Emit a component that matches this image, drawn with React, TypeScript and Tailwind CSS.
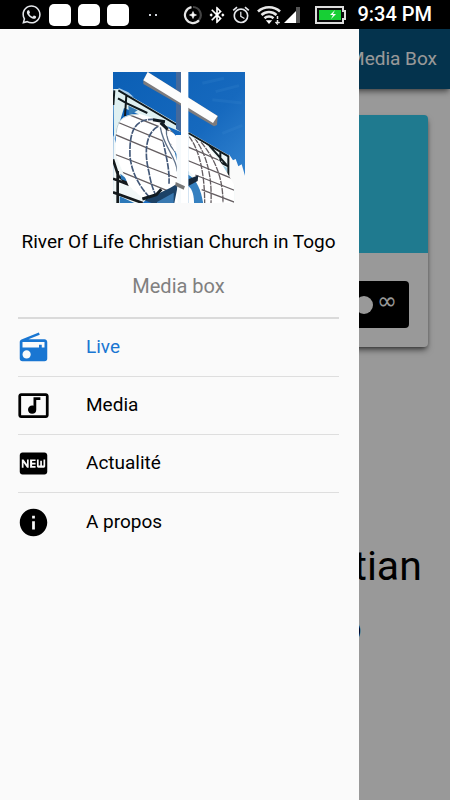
import React, { useState } from 'react';
import { FaWhatsapp } from 'react-icons/fa';
import { MdAccessAlarm, MdBluetoothConnected, MdFiberNew, MdInfo, MdMusicVideo, MdRadio } from 'react-icons/md';

const MENU = [
  { id: 'live', label: 'Live', Icon: MdRadio },
  { id: 'media', label: 'Media', Icon: MdMusicVideo },
  { id: 'news', label: 'Actualité', Icon: MdFiberNew },
  { id: 'about', label: 'A propos', Icon: MdInfo },
];

const StatusBar: React.FC = () => (
  <div className="flex h-[29px] items-center justify-between bg-black pl-[21px] pr-[18px] text-white">
    <div className="flex items-center gap-[7px]">
      <FaWhatsapp className="h-[21px] w-[21px] text-gray-200" />
      <span className="h-[22px] w-[22px] rounded-[5px] bg-white" />
      <span className="h-[22px] w-[22px] rounded-[5px] bg-white" />
      <span className="h-[22px] w-[22px] rounded-[5px] bg-white" />
      <span className="ml-[13px] flex gap-1">
        <span className="h-[2px] w-[2px] bg-gray-300" />
        <span className="h-[2px] w-[2px] bg-gray-300" />
      </span>
    </div>
    <div className="flex items-center">
      <svg viewBox="0 0 20 20" className="mr-1 h-5 w-5" fill="none" strokeWidth="2.2">
        <path d="M10 2a8 8 0 0 1 6 13" stroke="#444" />
        <path d="M8.500 2.200A8 8 0 1 0 16 15.300" stroke="#e5e5e5" />
        <path d="M10 6.500l1 2.500 2.500 1-2.500 1-1 2.500-1-2.500-2.500-1 2.500-1z" fill="#fff" stroke="#fff" strokeWidth=".6" />
      </svg>
      <MdBluetoothConnected className="mr-1 h-5 w-5" />
      <MdAccessAlarm className="mr-[6px] h-5 w-5 text-gray-200" />
      <svg viewBox="0 0 24 20" className="mr-[3px] h-5 w-6" fill="none" stroke="#e8e8e8" strokeWidth="2.600">
        <path d="M1 6.500C7 .8 17 .8 23 6.500" />
        <path d="M4.500 10C9 6 15 6 19.500 10" />
        <path d="M7.500 13.200C10 11 14 11 16.500 13.200" />
        <path d="M8.800 15.200h6.400L12 19z" fill="#fff" stroke="none" />
        <path d="M20.500 11v8M18.500 17l2 2 2-2" strokeWidth="1.500" strokeDasharray="3 1" />
      </svg>
      <svg viewBox="0 0 16 16" className="mr-[15px] h-4 w-4">
        <path d="M16 0v16H0z" fill="#fff" />
        <path d="M12 0h4v16h-4z" fill="#555" />
      </svg>
      <svg viewBox="0 0 31 18" className="mr-[11px] h-[18px] w-[31px]">
        <path d="M1 1h27v4h2v8h-2v4H1z" fill="#0a0a0a" stroke="#ddd" strokeWidth="2" />
        <path d="M4 4h22v10H4z" fill="#17cf35" />
        <path d="M20 4l-5 5h3l-2 4 5-5h-3z" fill="#fff" />
      </svg>
      <span className="text-[20px] leading-[29px] font-medium">9:34 PM</span>
    </div>
  </div>
);

// Church front: white cross over the globe-shaped fretwork
const ChurchLogo: React.FC = () => (
  <svg viewBox="22 21 396 393" className="h-[131px] w-[132px]" role="img" aria-label="River Of Life">
    <defs>
      <linearGradient id="sky" x1="0" y1="0" x2="1" y2="1">
        <stop offset="0" stopColor="#0b5fb5" />
        <stop offset=".55" stopColor="#1669be" />
        <stop offset="1" stopColor="#3a8ad4" />
      </linearGradient>
      <clipPath id="globe">
        <path d="M30 205C34 158 62 147 101 146L170 168 222 225V360L190 373 145 402H115L70 365 30 270z" />
      </clipPath>
      <clipPath id="wing">
        <path d="M248 212L300 238 346 293 385 358V414H294L270 340 248 318z" />
      </clipPath>
    </defs>
    <path d="M22 21h396v393H22z" fill="url(#sky)" />
    <path d="M330 80l70-18M320 104l88 10M350 205l60-24M290 55l65-15" stroke="#4b96d8" strokeWidth="9" opacity=".15" />
    <path d="M370 414V268l12 18 8-4 8 22 10-6 10 34v82z" fill="#fafafa" />

    {/* left roof frame */}
    <path d="M23 72l16 0 185 109v19L55 129l-30 98z" fill="#dff0f1" />
    <path d="M38 68l30 14 16 14-40-12z" fill="#a9cdea" />
    <path d="M38 76l186 110M37 100l28 16 60 28M62 92l-4 61M26 76l-3 44" stroke="#10191d" strokeWidth="6" fill="none" />
    <path d="M68 122l28 14-26 16z" fill="#337bb5" />
    <path d="M23 210l28 85 79 103-20 16H22z" fill="#f2f8f8" />
    <path d="M22 283l16 50 91 72M22 341l52 20M22 382l89 32M36 318v96" stroke="#14191c" strokeWidth="8" fill="none" />
    <path d="M44 326l33 27-31-10zM42 394l44 20H42z" fill="#2b78b9" />

    <path d="M30 205C34 158 62 147 101 146L170 168 222 225V360L190 373 145 402H115L70 365 30 270z" fill="#fff" />
    <g clipPath="url(#globe)" fill="none">
      <path d="M20 165l210 87M20 205l210 88M20 265l210 80M60 145l170 68M45 320l160 65" stroke="#665f62" strokeWidth="4" />
      <path d="M170 166C92 152 70 187 73 274c6 58 35 98 64 129M178 177c-60 11-64 82-48 145 5 32 15 62 27 82M181 183c-28 27 13 92 9 173" stroke="#435878" strokeWidth="5" strokeDasharray="20 3" />
      <path d="M31 205c4-49 26-55 68-58" stroke="#bed0d5" strokeWidth="4" />
    </g>
    <path d="M158 178c3 53 52 104 57 149l-12 87h20l8-80V265l-24-13c-16-20-27-42-23-66z" fill="#fff" />
    <path d="M164 187c9 58 48 88 51 132M182 184c-2 30 9 58 27 77" stroke="#5e7189" strokeWidth="4" fill="none" />
    <path d="M185 210l5-14c13 8 29 27 36 39v34l-20-12z" fill="#fff" />
    <path d="M206 257l18 24v26c-10-13-13-30-18-50z" fill="#2974b5" />
    <path d="M193 369l25-15-12 60h-68l-22-8z" fill="#1c4267" />
    <path d="M154 411l50-28v31h-50z" fill="#3979b1" />
    <path d="M110 402l42-13 15-16M165 173l21 20M142 164l36 6" stroke="#111b22" strokeWidth="9" fill="none" />

    {/* right wing */}
    <path d="M248 200l122 71v65l16 25v53h-94l-24-70-20-15z" fill="#eef8f8" />
    <path d="M248 204l120 70v66M311 242l51 57M344 259v43M344 292l24 12" stroke="#121c20" strokeWidth="6" fill="none" />
    <path d="M348 300l16 8v20l-16-12z" fill="#9ccce2" />
    <path d="M248 212L300 238 346 293 385 358V414H294L270 340 248 318z" fill="#fff" />
    <g clipPath="url(#wing)" fill="none" stroke="#655e62" strokeWidth="4">
      <path d="M245 245l115 49M245 286l145 59M269 330l125 49M288 374l105 40" />
      <path d="M250 214c32 41 47 114 47 200M266 218c42 57 53 125 50 196M286 231c50 60 66 120 66 183" strokeDasharray="19 3" />
    </g>
    <path d="M248 330c25 16 38 42 44 84h-44z" fill="#3580c0" />
    <path d="M248 343l30-12-2 17-28 15z" fill="#16283b" />
    <path d="M248 363c13 10 17 31 17 51h-17z" fill="#fff" />

    {/* cross */}
    <path d="M211 21h15v180l-15-9z" fill="#44699b" />
    <path d="M126 21L336 153l-2 27-9 4-73-43-33-23-106-61V46z" fill="#7d7b7d" />
    <path d="M126 21L336 153l-14 21L113 46z" fill="#fdfdfd" />
    <path d="M211 210h16v204h-11z" fill="#f6fafc" />
    <path d="M226 21h22v393h-22z" fill="#fff" />
    <path d="M210 351l28 13-4 10-25-12z" fill="#777" />
  </svg>
);

const Drawer: React.FC = () => {
  const [active, setActive] = useState('live');

  return (
    <aside className="w-[359px] max-w-[85%] bg-[#fafafa] pl-[18px] pr-5">
      <div className="flex flex-col items-center border-b-2 border-[#dadada] pt-[43px] pb-[17px]">
        <ChurchLogo />
        <h1 className="mt-[25px] whitespace-nowrap text-[19px] leading-7 text-black">River Of Life Christian Church in Togo</h1>
        <p className="mt-4 text-[20px] leading-7 text-[#808080]">Media box</p>
      </div>
      <nav className="divide-y divide-[#dedede]">
        {MENU.map(({ id, label, Icon }) => (
          <button
            key={id}
            onClick={() => setActive(id)}
            className={`flex h-[58px] w-full items-center gap-9 text-left text-[19px] ${active === id ? 'text-[#1976d2]' : 'text-black'}`}
          >
            <Icon className="-ml-px h-[33px] w-[33px] shrink-0" />
            {label}
          </button>
        ))}
      </nav>
    </aside>
  );
};

const Home: React.FC = () => (
  <main className="min-h-full bg-white">
    <header className="flex h-[60px] items-center justify-end bg-[#075680] px-[13px] text-[19px] text-white shadow-md shadow-black/40">
      Media Box
    </header>
    <section className="mx-[22px] mt-[26px] overflow-hidden rounded-[4px] bg-white shadow-md shadow-black/50">
      <div className="h-[138px] bg-[#34cbee]" />
      <div className="px-[19px] pt-7 pb-[19px]">
        <div className="flex h-[47px] items-center justify-end rounded-[4px] bg-black pr-3 text-white">
          <span className="h-[18px] w-[18px] rounded-full bg-white" />
          <span className="ml-1 pb-2 font-['DejaVu_Sans'] text-[24px] leading-6">∞</span>
        </div>
      </div>
    </section>
    <h2 className="mt-[188px] text-center text-[41px] leading-[62px] text-black">
      River Of Life Christian Church in Togo
    </h2>
  </main>
);

const App: React.FC = () => (
  <div className="flex min-h-screen flex-col font-[Roboto,sans-serif]">
    <StatusBar />
    <div className="relative flex-1 overflow-hidden">
      <Home />
      <div className="absolute inset-0 flex bg-black/40">
        <Drawer />
      </div>
    </div>
  </div>
);

export default App;
